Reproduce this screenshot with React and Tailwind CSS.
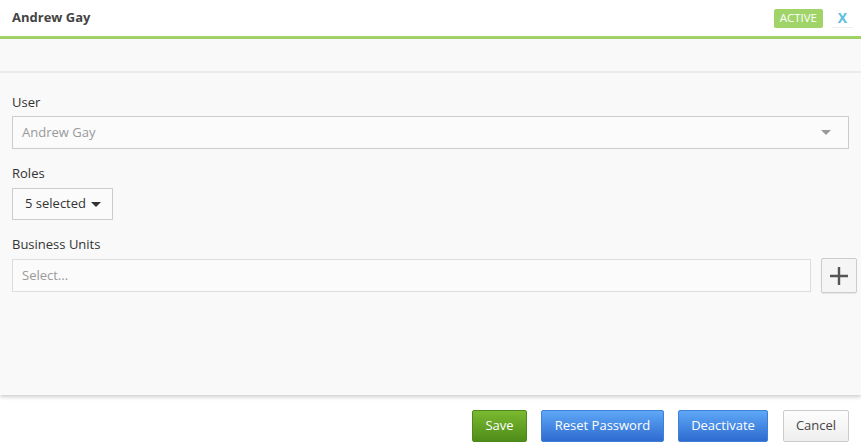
export default function App() {
  const font = { fontFamily: '"Open Sans", "Noto Sans", sans-serif' };
  return (
    <div className="w-[861px] h-[446px] bg-white flex flex-col text-[13px] text-[#333]" style={font}>
      {/* Header */}
      <div className="h-[36px] flex items-center justify-between pl-[12px] pr-[8px] shrink-0">
        <div className="font-bold text-[13px] text-[#444]">Andrew Gay</div>
        <div className="flex items-center">
          <span className="h-[19px] px-[6px] flex items-center bg-[#a0d468] text-white text-[11.5px] rounded-[2px]">ACTIVE</span>
          <span className="ml-[9px] w-[21px] h-[20px] flex items-center justify-center text-[#5bc0de] font-bold text-[14px] border-b border-[#eee]">X</span>
        </div>
      </div>
      <div className="h-[3px] bg-[#a0d468] shrink-0" />

      {/* Body */}
      <div className="h-[356px] bg-[#f9f9f9] shadow-[0_2px_4px_rgba(0,0,0,0.2)] shrink-0 relative">
        <div className="h-[34px] border-b-2 border-[#ececec]" />
        <div className="px-[12px] pt-[20px]">
          <div className="leading-[18px]">User</div>
          <div className="mt-[5px] h-[33px] border border-[#ccc] bg-[#fbfbfb] flex items-center justify-between pl-[9px] pr-[17px]">
            <span className="text-[#999]">Andrew Gay</span>
            <span className="w-0 h-0 border-l-[5px] border-r-[5px] border-t-[5px] border-l-transparent border-r-transparent border-t-[#999]" />
          </div>

          <div className="mt-[15px] leading-[18px]">Roles</div>
          <div className="mt-[6px] w-[101px] h-[32px] border border-[#ccc] bg-[#fbfbfb] flex items-center pl-[12px] gap-[5px]">
            <span>5 selected</span>
            <span className="w-0 h-0 border-l-[5px] border-r-[5px] border-t-[5px] border-l-transparent border-r-transparent border-t-[#333]" />
          </div>

          <div className="mt-[15px] leading-[18px]">Business Units</div>
          <div className="mt-[6px] -mr-[8px] flex items-start gap-[10px]">
            <div className="flex-1 h-[33px] border border-[#ddd] bg-[#fbfbfb] flex items-center pl-[9px] text-[#999]">Select...</div>
            <div className="w-[36px] h-[35px] -mt-[1px] border border-[#ccc] rounded-[2px] bg-[#f5f5f5] shadow-[0_1px_1px_rgba(0,0,0,0.08)] flex items-center justify-center">
              <svg width="22" height="22" viewBox="0 0 22 22">
                <path d="M11 2v18M2 11h18" stroke="#555" strokeWidth="2.4" />
              </svg>
            </div>
          </div>
        </div>
      </div>

      {/* Footer */}
      <div className="flex-1 flex items-start justify-end pr-[12px] pt-[15px] gap-[14px]">
        <button className="h-[32px] w-[55px] rounded-[2px] border border-[#4d8a1c] bg-gradient-to-b from-[#7ab92f] to-[#4f8d1a] text-white text-[13px]">Save</button>
        <button className="h-[32px] w-[123px] rounded-[2px] border border-[#3f7fd6] bg-gradient-to-b from-[#5ea8f7] to-[#2f6bd0] text-white text-[13px]">Reset Password</button>
        <button className="h-[32px] w-[90px] rounded-[2px] border border-[#3f7fd6] bg-gradient-to-b from-[#5ea8f7] to-[#2f6bd0] text-white text-[13px]">Deactivate</button>
        <button className="ml-[1px] h-[32px] w-[66px] rounded-[2px] border border-[#ccc] bg-gradient-to-b from-[#fdfdfd] to-[#eeeeee] text-[#444] text-[13px]">Cancel</button>
      </div>
    </div>
  );
}
